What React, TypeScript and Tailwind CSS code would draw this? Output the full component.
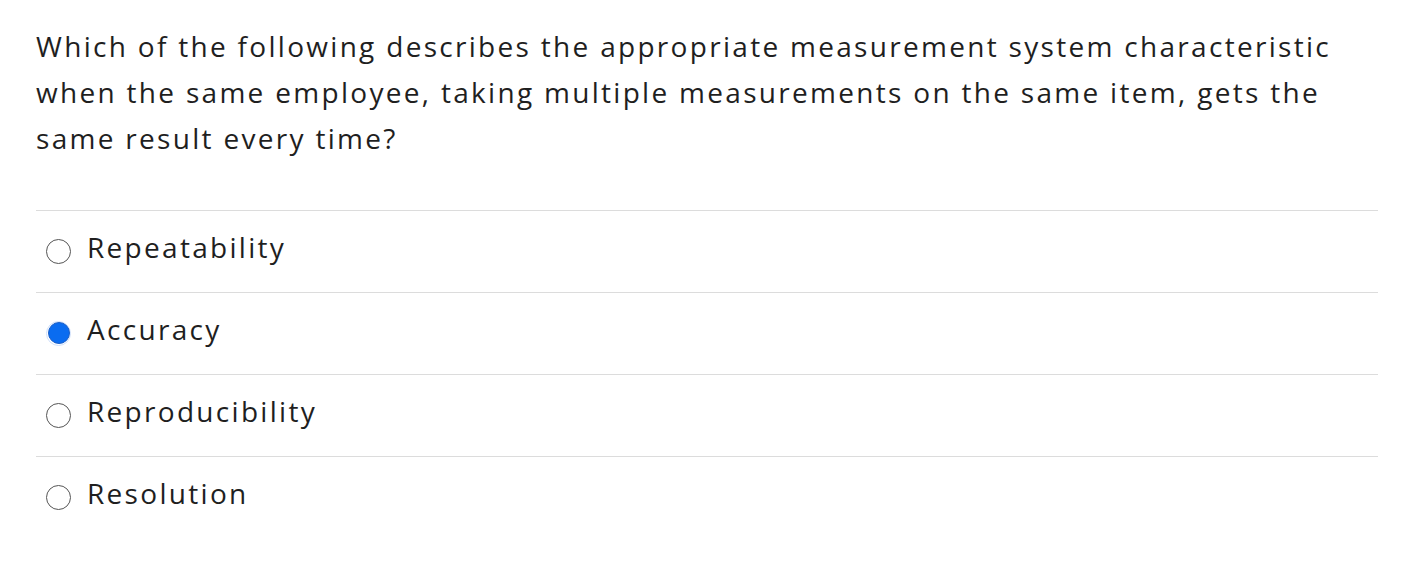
import React from "react";

const options = ["Repeatability", "Accuracy", "Reproducibility", "Resolution"];

function Radio({ checked }: { checked: boolean }) {
  if (checked) {
    return (
      <span className="flex h-[25px] w-[25px] items-center justify-center rounded-full border border-[#cfe0fb]">
        <span className="h-[22px] w-[22px] rounded-full border border-[#1b5fc8] bg-[#0a6cf0]" />
      </span>
    );
  }
  return <span className="block h-[25px] w-[25px] rounded-full border-[1.5px] border-[#555]" />;
}

export default function App() {
  return (
    <div className="min-h-[574px] bg-white px-[36px] pt-[23px] font-['Open_Sans',sans-serif] font-medium text-[#1f1f1f]">
      <p className="text-[28px] leading-[46px] tracking-[2.3px]">
        Which of the following describes the appropriate measurement system characteristic
        <br />
        when the same employee, taking multiple measurements on the same item, gets the
        <br />
        same result every time?
      </p>
      <div className="mt-[49px] w-[1342px]">
        {options.map((o, i) => (
          <div key={o} className="flex h-[82px] items-center gap-[16px] border-t-[1.5px] border-[#dcdcdc] pl-[10px] pb-[1px]">
            <Radio checked={i === 1} />
            <span className="text-[28px] tracking-[2.3px] leading-none -mt-[8px]">{o}</span>
          </div>
        ))}
      </div>
    </div>
  );
}
